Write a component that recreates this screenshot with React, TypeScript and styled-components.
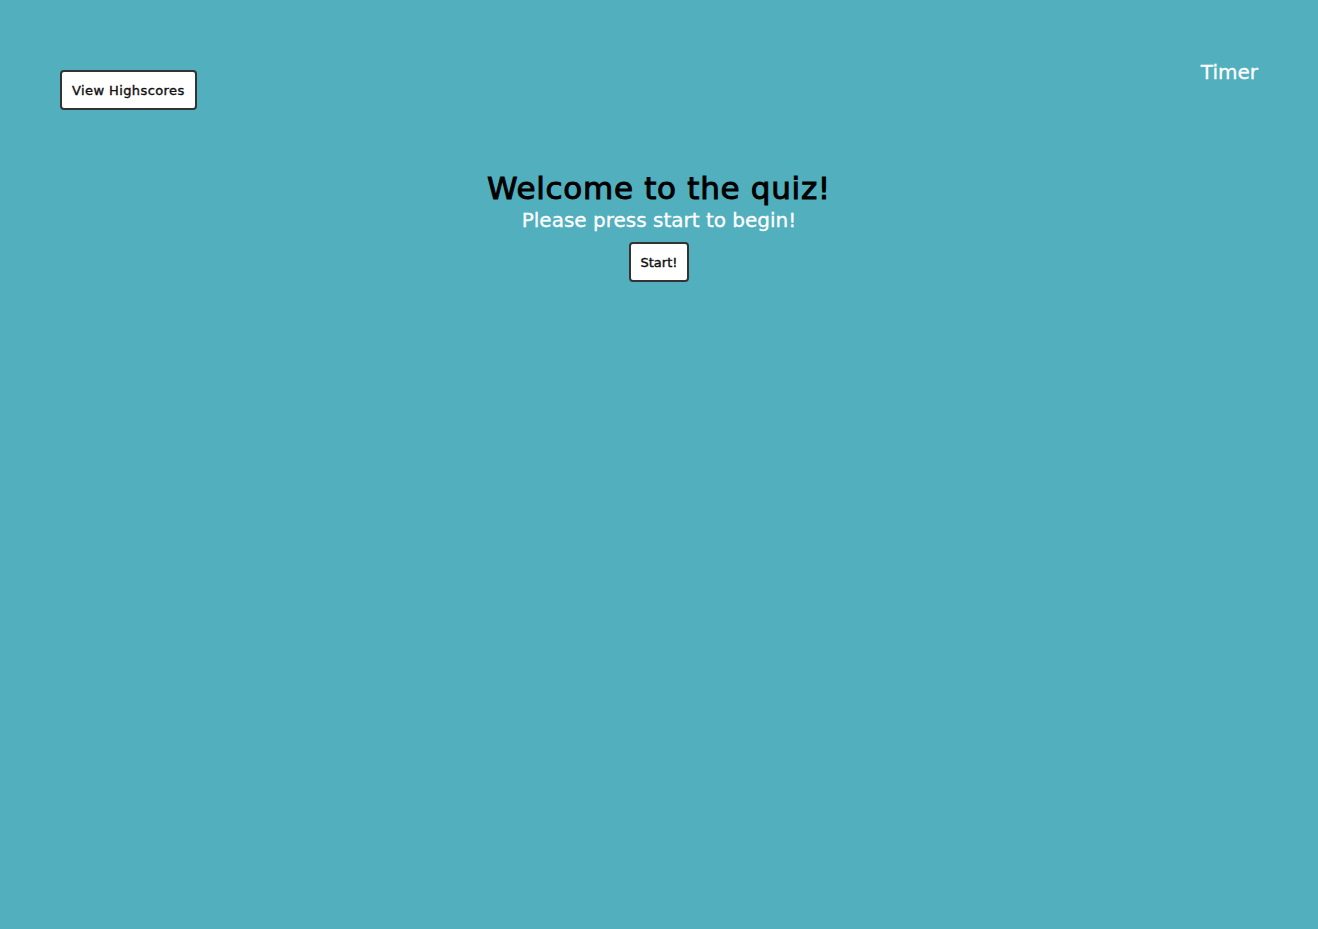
import React from "react";
import styled, { createGlobalStyle } from "styled-components";

const Global = createGlobalStyle`
  html, body { margin: 0; padding: 0; }
  body {
    background: #52afbe;
    font-family: "DejaVu Sans", "Noto Sans", sans-serif;
    min-height: 929px;
  }
`;

const Page = styled.div`
  padding: 60px 60px 0 60px;
`;

const Header = styled.header`
  display: flex;
  justify-content: space-between;
  align-items: flex-start;
`;

const Button = styled.button`
  box-sizing: border-box;
  background: #fff;
  border: 2px solid #333;
  border-radius: 4px;
  height: 40px;
  padding: 0 10px;
  font-family: "DejaVu Sans", sans-serif;
  font-size: 13px;
  font-weight: 400;
  -webkit-text-stroke: 0.4px #111;
  color: #111;
  letter-spacing: 0.4px;
  cursor: pointer;
`;

const HeaderButton = styled(Button)`
  margin-top: 10px;
`;

const Timer = styled.div`
  color: #fff;
  font-size: 20px;
  -webkit-text-stroke: 0.3px #fff;
`;

const Main = styled.main`
  display: flex;
  flex-direction: column;
  align-items: center;
  margin-top: 60px;
`;

const Title = styled.h1`
  margin: 0;
  font-size: 31px;
  font-weight: 400;
  -webkit-text-stroke: 1px #000;
  color: #000;
  letter-spacing: 0.7px;
`;

const Subtitle = styled.p`
  margin: 2px 0 10px;
  font-size: 20px;
  color: #fff;
  -webkit-text-stroke: 0.3px #fff;
`;

const StartButton = styled(Button)`
  letter-spacing: 0;
`;

export default function App() {
  return (
    <>
      <Global />
      <Page>
        <Header>
          <HeaderButton>View Highscores</HeaderButton>
          <Timer>Timer</Timer>
        </Header>
        <Main>
          <Title>Welcome to the quiz!</Title>
          <Subtitle>Please press start to begin!</Subtitle>
          <StartButton>Start!</StartButton>
        </Main>
      </Page>
    </>
  );
}
